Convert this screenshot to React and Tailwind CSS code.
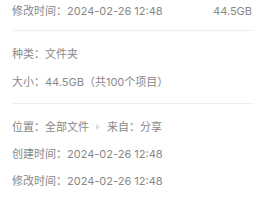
import React from 'react';

const rowCls = 'h-5 flex items-center text-[11px] leading-5 text-[#888]';

const Row = ({ label, value, className = '' }) => (
  <div className={`${rowCls} ${className}`}>
    <span>{label}：</span>
    <span>{value}</span>
  </div>
);

const App = () => {
  return (
    <div
      className="w-[266px] h-[213px] bg-white overflow-hidden px-3"
      style={{ fontFamily: 'Inter, "Noto Sans CJK SC", sans-serif' }}
    >
      {/* 顶部摘要 */}
      <div className="pt-[1px] flex items-center justify-between h-[21px] text-[11px] text-[#888]">
        <div>
          <span>修改时间：</span>
          <span>2024-02-26 12:48</span>
        </div>
        <span className="pr-[2px]">44.5GB</span>
      </div>
      <div className="mt-[9px] border-t border-[#eeeeee]" />

      {/* 类型与大小 */}
      <div className="pt-[13px] pb-[11px] flex flex-col gap-2">
        <Row label="种类" value="文件夹" />
        <Row label="大小" value="44.5GB（共100个项目）" />
      </div>
      <div className="border-t border-[#eeeeee]" />

      {/* 位置与时间 */}
      <div className="pt-[13px] flex flex-col">
        <div className={rowCls}>
          <span>位置：全部文件</span>
          <svg width="10" height="10" viewBox="0 0 10 10" className="mx-[4px]">
            <path d="M3 2 L7 5 L3 8 Z" fill="#dddddd" />
          </svg>
          <span>来自：分享</span>
        </div>
        <Row label="创建时间" value="2024-02-26 12:48" className="mt-[7px]" />
        <Row label="修改时间" value="2024-02-26 12:48" className="mt-[7px]" />
      </div>
    </div>
  );
};

export default App;
